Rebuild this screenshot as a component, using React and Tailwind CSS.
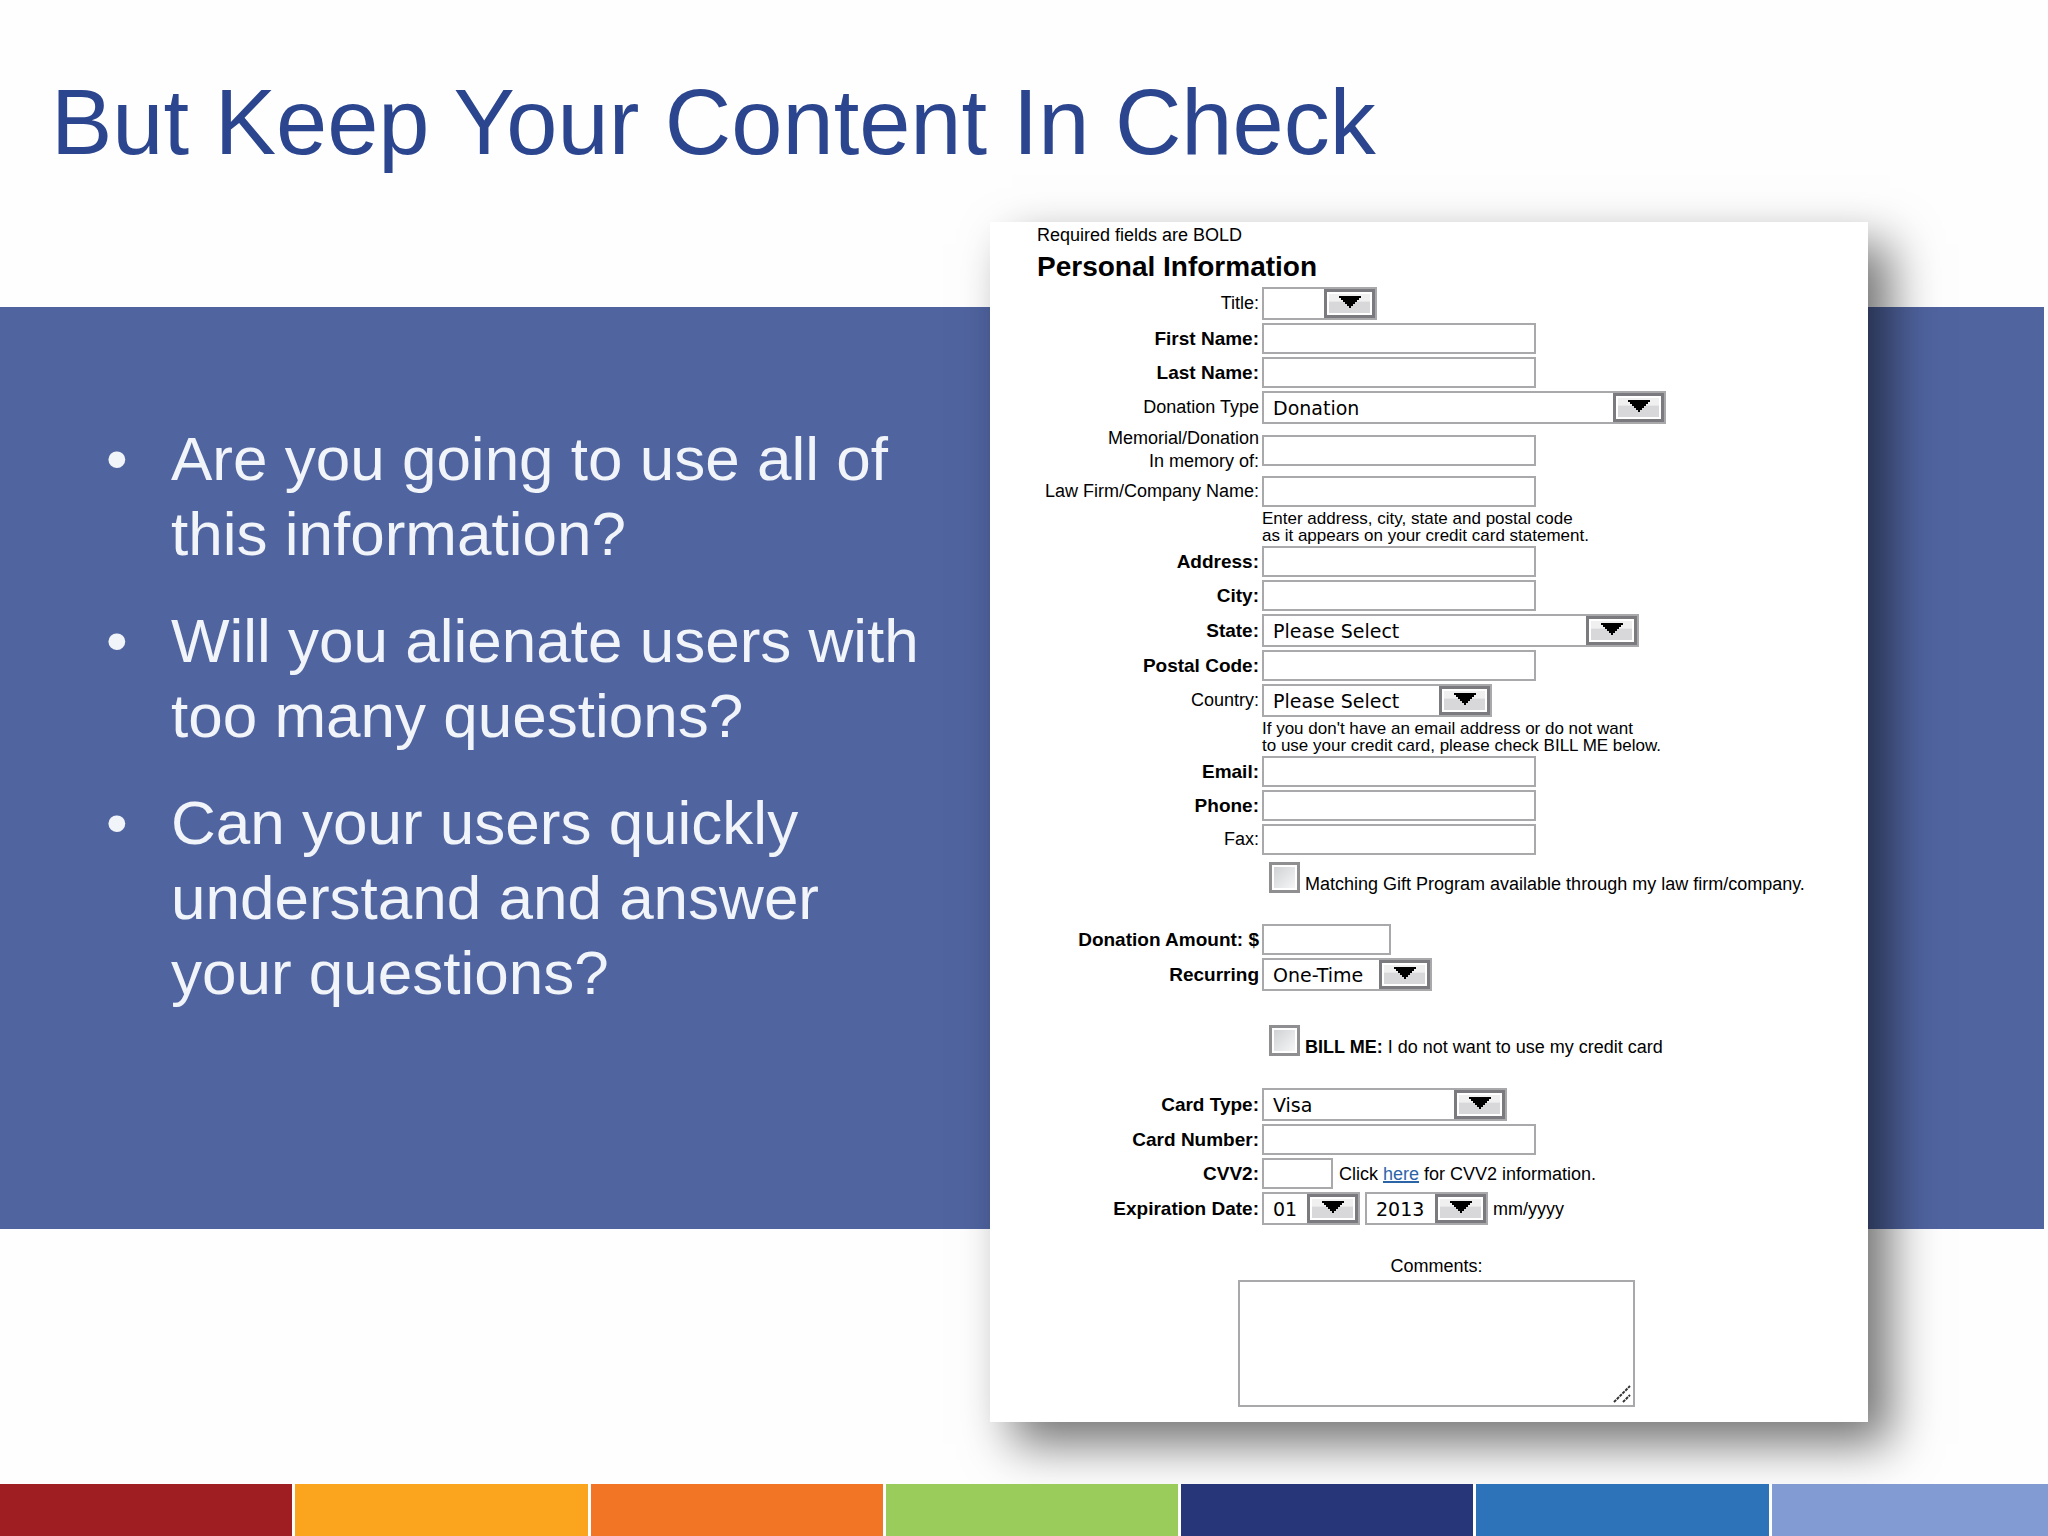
import React from "react";
import clsx from "clsx";

const points = [
  "Are you going to use all of this information?",
  "Will you alienate users with too many questions?",
  "Can your users quickly understand and answer your questions?",
];

const stripes = [
  "bg-[#9e1e22]",
  "bg-[#fba51e]",
  "bg-[#f17524]",
  "bg-[#99cc5a]",
  "bg-[#263678]",
  "bg-[#2d73b9]",
  "bg-[#829bd2]",
];

function Label({ htmlFor, bold, children }) {
  return (
    <label
      htmlFor={htmlFor}
      className={clsx("self-center text-right leading-[23px]", bold ? "text-[19px] font-bold" : "text-[18px]")}
    >
      {children}
    </label>
  );
}

function TextBox({ id, className = "w-[274px]" }) {
  return (
    <input
      id={id}
      type="text"
      className={clsx("block h-[31px] self-center border-2 border-[#a9a9ac] bg-white px-2 text-[18px] outline-none", className)}
    />
  );
}

function SelectBox({ id, options, className, ...props }) {
  return (
    <div className={clsx("relative h-[33px]", className)}>
      <select
        id={id}
        className="block size-full appearance-none border-2 border-[#a9a9ac] bg-white pl-[9px] font-['DejaVu_Sans',sans-serif] text-[19px] leading-[28px] outline-none"
        {...props}
      >
        {options.map((option) => (
          <option key={option}>{option}</option>
        ))}
      </select>
      <span className="pointer-events-none absolute inset-y-[2px] right-[2px] w-[51px] border-[3px] border-[#7b7a7e] bg-white p-[2px]">
        <span className="flex size-full items-center justify-center bg-linear-to-b from-[#f0f0f1] from-38% to-[#d8d8db] to-42% pb-[3px]">
          <svg width="22" height="13" viewBox="0 0 22 13" aria-hidden="true">
            <path d="M0 0h22v2h-2v2h-2v2h-2v2h-2v2h-2v2h-2v-2H8V8H6V6H4V4H2V2H0z" fill="#000" />
          </svg>
        </span>
      </span>
    </div>
  );
}

function CheckBox({ id, children, className }) {
  return (
    <div className={clsx("col-start-2 flex items-start gap-[5px] pl-[7px]", className)}>
      <input
        id={id}
        type="checkbox"
        className="size-[31px] shrink-0 appearance-none border-[3px] border-[#8f8f92] bg-linear-to-br from-[#cfd2d4] to-[#f6f6f7] bg-clip-content bg-origin-content p-[2px]"
      />
      <label htmlFor={id} className="mt-[11px] text-[18px] leading-[22px] whitespace-nowrap">
        {children}
      </label>
    </div>
  );
}

function Hint({ children }) {
  return <p className="col-start-2 -mb-px text-[17px] leading-[17px]">{children}</p>;
}

function DonationForm() {
  return (
    <form className="relative -mt-[85px] -mb-[193px] w-[878px] shrink-0 bg-white pt-[2px] pb-[15px] text-black shadow-[22px_22px_46px_rgba(0,0,0,0.55)]">
      <div className="pl-[47px]">
        <p className="text-[18px] leading-[22px]">Required fields are BOLD</p>
        <h2 className="mt-[3px] text-[28px] leading-[36px] font-bold">Personal Information</h2>

        <div className="mt-[2px] grid grid-cols-[222px_1fr] gap-[3px]">
          <Label htmlFor="title">Title:</Label>
          <SelectBox id="title" options={[""]} className="w-[115px]" />

          <Label htmlFor="firstName" bold>First Name:</Label>
          <TextBox id="firstName" />

          <Label htmlFor="lastName" bold>Last Name:</Label>
          <TextBox id="lastName" />

          <Label htmlFor="donationType">Donation Type</Label>
          <SelectBox id="donationType" options={["Donation"]} className="w-[404px]" />

          <Label htmlFor="memorial">
            Memorial/Donation
            <br />
            In memory of:
          </Label>
          <TextBox id="memorial" />

          <Label htmlFor="company">Law Firm/Company Name:</Label>
          <TextBox id="company" />

          <Hint>
            Enter address, city, state and postal code
            <br />
            as it appears on your credit card statement.
          </Hint>

          <Label htmlFor="address" bold>Address:</Label>
          <TextBox id="address" />

          <Label htmlFor="city" bold>City:</Label>
          <TextBox id="city" />

          <Label htmlFor="state" bold>State:</Label>
          <SelectBox id="state" options={["Please Select"]} className="w-[377px]" />

          <Label htmlFor="postalCode" bold>Postal Code:</Label>
          <TextBox id="postalCode" />

          <Label htmlFor="country">Country:</Label>
          <SelectBox id="country" options={["Please Select"]} className="w-[230px]" />

          <Hint>
            If you don't have an email address or do not want
            <br />
            to use your credit card, please check BILL ME below.
          </Hint>

          <Label htmlFor="email" bold>Email:</Label>
          <TextBox id="email" />

          <Label htmlFor="phone" bold>Phone:</Label>
          <TextBox id="phone" />

          <Label htmlFor="fax">Fax:</Label>
          <TextBox id="fax" />

          <CheckBox id="matchingGift" className="pt-1 pb-[26px]">
            Matching Gift Program available through my law firm/company.
          </CheckBox>

          <Label htmlFor="amount" bold>Donation Amount: $</Label>
          <TextBox id="amount" className="w-[129px]" />

          <Label htmlFor="recurring" bold>Recurring</Label>
          <SelectBox id="recurring" options={["One-Time"]} className="w-[170px]" />

          <CheckBox id="billMe" className="pt-[31px] pb-[27px]">
            <b>BILL ME:</b> I do not want to use my credit card
          </CheckBox>

          <Label htmlFor="cardType" bold>Card Type:</Label>
          <SelectBox id="cardType" options={["Visa"]} className="w-[245px]" />

          <Label htmlFor="cardNumber" bold>Card Number:</Label>
          <TextBox id="cardNumber" />

          <Label htmlFor="cvv2" bold>CVV2:</Label>
          <div className="flex items-center gap-[6px] text-[18px] leading-[22px]">
            <TextBox id="cvv2" className="w-[71px]" />
            <span>
              Click <a href="#cvv2" className="text-[#2c64a8] underline decoration-2">here</a> for CVV2 information.
            </span>
          </div>

          <Label htmlFor="expMonth" bold>Expiration Date:</Label>
          <div className="flex items-center gap-[5px] text-[18px] leading-[22px]">
            <SelectBox id="expMonth" options={["01"]} className="w-[98px]" />
            <SelectBox id="expYear" options={["2013"]} className="w-[123px]" aria-label="Expiration year" />
            <span>mm/yyyy</span>
          </div>
        </div>
      </div>

      <div className="mt-[30px] ml-[248px] flex w-[397px] flex-col items-center gap-[3px]">
        <label htmlFor="comments" className="text-[18px] leading-[22px]">Comments:</label>
        <div className="relative h-[127px] w-full">
          <textarea id="comments" className="block size-full resize-none border-2 border-[#a9a9ac] bg-white p-2 text-[18px] outline-none" />
          <svg className="pointer-events-none absolute right-1 bottom-1" width="18" height="18" viewBox="0 0 18 18" aria-hidden="true">
            <path d="M1 17 17 1M10 17l7-7" stroke="#333" strokeWidth="2" strokeDasharray="3 1" fill="none" />
          </svg>
        </div>
      </div>
    </form>
  );
}

export default function App() {
  return (
    <main className="flex min-h-screen flex-col overflow-hidden bg-[#fefefe] font-['Liberation_Sans',Arial,sans-serif]">
      <header className="px-[51px] pt-[70px] pb-[133px]">
        <h1 className="text-[92px] leading-[104px] text-[#2b468f]">But Keep Your Content In Check</h1>
      </header>

      <section className="mr-1 flex items-start bg-[#5064a0] pr-[176px]">
        <ul className="flex flex-1 flex-col gap-8 pt-[114px] pr-12 pl-[106px] text-[62px] leading-[75px] text-[#f1f4f9]">
          {points.map((point) => (
            <li key={point} className="flex">
              <span className="w-[65px] shrink-0">•</span>
              <span>{point}</span>
            </li>
          ))}
        </ul>
        <DonationForm />
      </section>

      <footer className="relative mt-auto grid h-[52px] grid-cols-[repeat(6,292fr)_276fr] gap-[3px] bg-white">
        {stripes.map((color) => (
          <div key={color} className={color} />
        ))}
      </footer>
    </main>
  );
}
